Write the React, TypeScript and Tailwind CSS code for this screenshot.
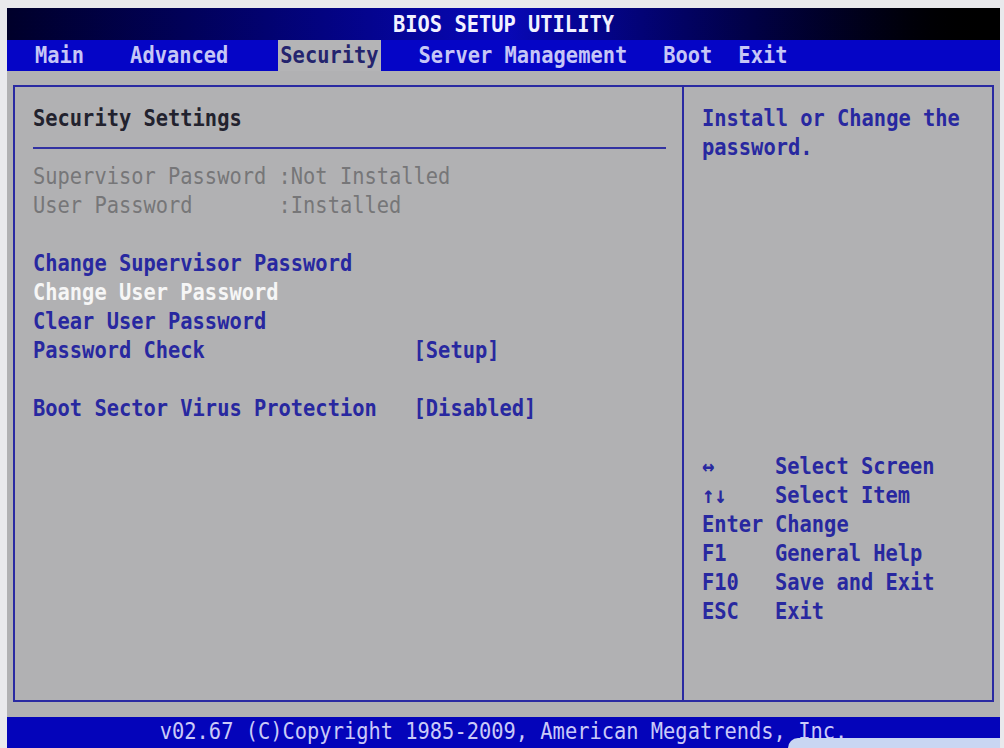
import React from 'react';

const mono = "font-['DejaVu_Sans_Mono','Liberation_Mono',monospace]";

const menu = [
    { label: 'Main', ml: 'ml-[28px]' },
    { label: 'Advanced', ml: 'ml-[46px]' },
    { label: 'Security', ml: 'ml-[50px]', active: true },
    { label: 'Server Management', ml: 'ml-[38px]' },
    { label: 'Boot', ml: 'ml-[36px]' },
    { label: 'Exit', ml: 'ml-[26px]' },
];

const help = [
    ['\u2194', 'Select Screen'],
    ['\u2191\u2193', 'Select Item'],
    ['Enter', 'Change'],
    ['F1', 'General Help'],
    ['F10', 'Save and Exit'],
    ['ESC', 'Exit'],
];

// bios glyphs are taller than they are wide
const tall = 'inline-block scale-y-[1.15]';

const Row: React.FC<{ children?: React.ReactNode; className?: string }> = ({ children, className = '' }) => (
    <div className={`h-[29px] leading-[29px] whitespace-pre ${className}`}>
        <span className={tall}>{children}</span>
    </div>
);

const App: React.FC = () => {
    return (
        <div className={`w-[1004px] h-[748px] bg-[#e9e9ec] pt-[8px] pl-[7px] pr-[4px] flex flex-col overflow-hidden ${mono} text-[20.4px]`}>
            <div className="flex-1 flex flex-col bg-[#b1b1b3]">
                {/* title */}
                <div className="h-[32px] leading-[32px] text-center font-bold text-[#f2f2ff] bg-gradient-to-r from-[#00002a] via-[#0808b8] to-[#000000]">
                    <span className={tall}>BIOS SETUP UTILITY</span>
                </div>

                {/* menu bar */}
                <div className="h-[31px] flex items-stretch bg-[#0505c6] font-bold">
                    {menu.map((m) => (
                        <div
                            key={m.label}
                            className={`${m.ml} leading-[31px] ${m.active ? 'bg-[#b4b4b6] text-[#24246e] px-[2px]' : 'text-[#c6c6f6]'}`}
                        >
                            <span className={tall}>{m.label}</span>
                        </div>
                    ))}
                </div>

                {/* body */}
                <div className="flex-1 pt-[14px] pb-[15px] px-[6px]">
                    <div className="h-full flex border-2 border-[#2a2aa2]">
                        <div className="w-[669px] border-r-2 border-[#2a2aa2] pl-[18px] pr-[16px] pt-[17px] font-bold">
                            <Row className="text-[#22222e]">Security Settings</Row>
                            <div className="h-[29px] flex items-center">
                                <div className="w-full h-[2px] bg-[#3232a2]" />
                            </div>
                            <Row className="text-[#767678] font-normal">Supervisor Password :Not Installed</Row>
                            <Row className="text-[#767678] font-normal">User Password       :Installed</Row>
                            <Row />
                            <Row className="text-[#2828a0]">Change Supervisor Password</Row>
                            <Row className="text-[#f6f6f6]">Change User Password</Row>
                            <Row className="text-[#2828a0]">Clear User Password</Row>
                            <Row className="text-[#2828a0]">Password Check                 [Setup]</Row>
                            <Row />
                            <Row className="text-[#2828a0]">Boot Sector Virus Protection   [Disabled]</Row>
                        </div>

                        <div className="flex-1 pl-[18px] pt-[17px] font-bold text-[#2828a0]">
                            <Row>Install or Change the</Row>
                            <Row>password.</Row>
                            <div className="mt-[290px]">
                                {help.map(([k, v]) => (
                                    <div key={k} className="flex h-[29px] leading-[29px]">
                                        <span className={`w-[73px] ${tall}`}>{k}</span>
                                        <span className={tall}>{v}</span>
                                    </div>
                                ))}
                            </div>
                        </div>
                    </div>
                </div>

                {/* footer */}
                <div className="relative h-[31px] leading-[28px] text-center bg-[#0404ba] text-[#cacaf8] overflow-hidden">
                    <span className={tall}>v02.67 (C)Copyright 1985-2009, American Megatrends, Inc.</span>
                    <div className="absolute left-[781px] top-[21px] w-[240px] h-[20px] rounded-tl-[10px] bg-[#c9d6f2]" />
                </div>
            </div>
        </div>
    );
};

export default App;
